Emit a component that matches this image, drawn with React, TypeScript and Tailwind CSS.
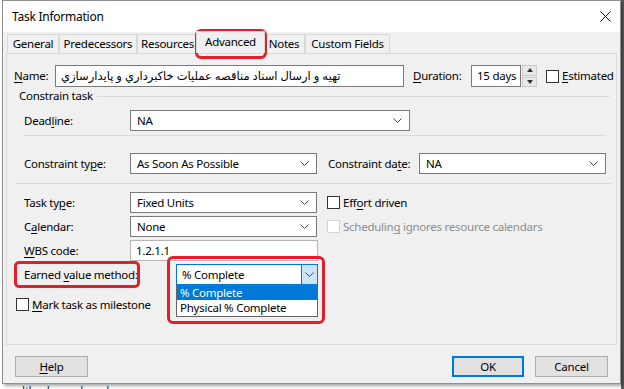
import React from "react";

/**
 * MS Project "Task Information" dialog, Advanced tab, with red annotation boxes.
 */

const U = ({ children }: { children: React.ReactNode }) => (
  <span className="underline underline-offset-[2px] decoration-[1px]">{children}</span>
);

const Chevron = () => (
  <svg width="9" height="5" viewBox="0 0 9 5" className="shrink-0">
    <path d="M0.5 0.5 L4.5 4.5 L8.5 0.5" fill="none" stroke="#444" strokeWidth="1" />
  </svg>
);

function Combo({ value, w, h = 21 }: { value: string; w: number; h?: number }) {
  return (
    <div
      className="flex items-center justify-between border border-[#7a7a7a] bg-white pl-[6px] pr-[7px]"
      style={{ width: w, height: h }}
    >
      <span>{value}</span>
      <Chevron />
    </div>
  );
}

function Check({ disabled }: { disabled?: boolean }) {
  return (
    <span
      className={`inline-block h-[13px] w-[13px] shrink-0 border bg-white ${
        disabled ? "border-[#d4d4d4] bg-[#f7f7f7]" : "border-[#333]"
      }`}
    />
  );
}

function Tab({ label, active, w }: { label: React.ReactNode; active?: boolean; w: number }) {
  return (
    <div
      className={`flex items-center justify-center border border-b-0 border-[#d9d9d9] ${
        active ? "h-[22px] -mx-[2px] z-10 bg-[#f0f0f0] pb-[2px]" : "h-[19px] bg-[#f0f0f0]"
      }`}
      style={{ width: w }}
    >
      {label}
    </div>
  );
}

export default function App() {
  return (
    <div
      className="relative h-[389px] w-[624px] overflow-hidden bg-white text-[11.5px] tracking-[-0.25px] text-black"
      style={{ fontFamily: '"Noto Sans", "DejaVu Sans", sans-serif' }}
    >
      {/* background sheet behind dialog */}
      <div className="absolute left-[17px] top-[384px] text-[11px] leading-[12px] text-[#222]">
        ﭘﻴﺎﺩﻩ ﺳﺎﺯﻱ ﺩﻳﻮﺍﺭ ﺣﺎﺋﻞ
      </div>
      <div className="absolute right-0 top-0 h-[389px] w-[3px] bg-[#5a5a5a]" />

      {/* dialog */}
      <div className="relative ml-[2px] flex h-[384px] w-[619px] flex-col border border-[#8f8f8f] bg-[#f0f0f0] shadow-[2px_2px_3px_rgba(0,0,0,0.35)]">
        {/* title bar */}
        <div className="flex h-[31px] items-center justify-between bg-white pl-[9px] pr-[9px]">
          <span className="text-[12px]">Task Information</span>
          <svg width="11" height="11" viewBox="0 0 11 11">
            <path d="M0.5 0.5 L10.5 10.5 M10.5 0.5 L0.5 10.5" stroke="#111" strokeWidth="1" />
          </svg>
        </div>

        {/* tabs */}
        <div className="flex h-[21px] items-end pl-[4px]">
          <Tab label="General" w={52} />
          <Tab label="Predecessors" w={78} />
          <Tab label="Resources" w={61} />
          <Tab label="Advanced" w={69} active />
          <Tab label="Notes" w={42} />
          <Tab label="Custom Fields" w={85} />
        </div>

        {/* panel */}
        <div className="mx-[3px] flex h-[292px] flex-col border border-[#d9d9d9]">
          {/* name row */}
          <div className="mt-[11px] flex h-[22px] items-center">
            <span className="w-[48px] pl-[7px]">
              <U>N</U>ame:
            </span>
            <div className="flex h-[22px] w-[349px] items-center border border-[#7a7a7a] bg-white pl-[5px] pr-[6px]">
              <span>تهیه و ارسال اسناد مناقصه عملیات خاکبرداري و پایدارسازي</span>
            </div>
            <span className="ml-[9px] w-[58px]">
              <U>D</U>uration:
            </span>
            <div className="flex h-[22px] w-[50px] items-center border border-[#7a7a7a] bg-white pl-[5px]">
              15 days
            </div>
            <div className="ml-[1px] flex h-[22px] w-[15px] flex-col gap-[1px]">
              <div className="flex flex-1 items-center justify-center border border-[#c8c8c8] bg-[#e8e8e8]">
                <svg width="6" height="4" viewBox="0 0 6 4">
                  <path d="M0 4 L3 0 L6 4 Z" fill="#333" />
                </svg>
              </div>
              <div className="flex flex-1 items-center justify-center border border-[#c8c8c8] bg-[#e8e8e8]">
                <svg width="6" height="4" viewBox="0 0 6 4">
                  <path d="M0 0 L3 4 L6 0 Z" fill="#333" />
                </svg>
              </div>
            </div>
            <div className="ml-[9px] flex items-center gap-[3px]">
              <Check />
              <span>
                <U>E</U>stimated
              </span>
            </div>
          </div>

          {/* constrain task header */}
          <div className="mt-[1px] flex h-[16px] items-center pl-[12px]">
            <span>Constrain task</span>
            <div className="ml-[4px] mr-[6px] h-px flex-1 bg-[#dcdcdc]" />
          </div>

          {/* deadline */}
          <div className="mt-[6px] flex items-center">
            <span className="w-[123px] pl-[17px]">
              Dead<U>l</U>ine:
            </span>
            <Combo value="NA" w={280} />
          </div>
          <div className="ml-[16px] mt-[4px] h-px w-[583px] bg-[#dcdcdc]" />

          {/* constraint type/date */}
          <div className="mt-[17px] flex items-center">
            <span className="w-[123px] pl-[17px]">
              Constraint ty<U>p</U>e:
            </span>
            <Combo value="As Soon As Possible" w={187} />
            <span className="ml-[11px] w-[91px]">
              Constraint da<U>t</U>e:
            </span>
            <Combo value="NA" w={187} />
          </div>
          <div className="ml-[8px] mr-[4px] mt-[9px] h-px bg-[#dcdcdc]" />

          {/* task type */}
          <div className="mt-[8px] flex items-center">
            <span className="w-[123px] pl-[17px]">
              Task ty<U>p</U>e:
            </span>
            <Combo value="Fixed Units" w={187} />
            <div className="ml-[10px] flex items-center gap-[3px]">
              <Check />
              <span>
                Eff<U>o</U>rt driven
              </span>
            </div>
          </div>

          {/* calendar */}
          <div className="mt-[3px] flex items-center">
            <span className="w-[123px] pl-[17px]">
              C<U>a</U>lendar:
            </span>
            <Combo value="None" w={187} />
            <div className="ml-[10px] flex items-center gap-[3px] text-[#8d8d8d]">
              <Check disabled />
              <span>
                Schedulin<U>g</U> ignores resource calendars
              </span>
            </div>
          </div>

          {/* wbs */}
          <div className="mt-[3px] flex items-center">
            <span className="w-[123px] pl-[17px]">
              <U>W</U>BS code:
            </span>
            <div className="flex h-[21px] w-[188px] items-center border border-[#b5b5b5] bg-white pl-[5px]">
              1.2.1.1
            </div>
          </div>

          {/* earned value */}
          <div className="mt-[3px] flex items-center">
            <span className="w-[169px] pl-[17px]">
              Earned <U>v</U>alue method:
            </span>
            <div className="relative flex h-[21px] w-[142px] items-center border border-[#0078d7] bg-white">
              <span className="flex-1 pl-[5px]">% Complete</span>
              <div className="flex h-full w-[16px] items-center justify-center border-l border-[#0078d7] bg-[#cce4f7]">
                <Chevron />
              </div>
              {/* open list */}
              <div className="absolute left-[-1px] top-[20px] z-20 w-[142px] border border-[#646464] bg-white">
                <div className="h-[14px] bg-[#0078d7] pl-[3px] leading-[14px] text-white">% Complete</div>
                <div className="h-[16px] pl-[3px] leading-[15px]">Physical % Complete</div>
              </div>
            </div>
          </div>

          {/* milestone */}
          <div className="mt-[11px] flex items-center gap-[3px] pl-[9px]">
            <Check />
            <span>
              <U>M</U>ark task as milestone
            </span>
          </div>
        </div>

        {/* buttons */}
        <div className="mt-[11px] flex items-center px-[12px]">
          <div className="flex h-[21px] w-[73px] items-center justify-center border border-[#adadad] bg-[#e1e1e1]">
            <span>
              <U>H</U>elp
            </span>
          </div>
          <div className="ml-auto flex h-[21px] w-[72px] items-center justify-center border-2 border-[#0078d7] bg-[#e1e1e1]">
            OK
          </div>
          <div className="ml-[11px] flex h-[21px] w-[73px] items-center justify-center border border-[#adadad] bg-[#e1e1e1]">
            Cancel
          </div>
        </div>
      </div>

      {/* red annotation boxes */}
      <div className="pointer-events-none absolute left-[195px] top-[29px] h-[30px] w-[72px] rounded-[6px] border-[3px] border-[#e41e2b]" />
      <div className="pointer-events-none absolute left-[14px] top-[261px] h-[27px] w-[126px] rounded-[5px] border-[3px] border-[#e41e2b]" />
      <div className="pointer-events-none absolute left-[167px] top-[256px] h-[68px] w-[158px] rounded-[6px] border-[3px] border-[#e41e2b]" />
    </div>
  );
}
